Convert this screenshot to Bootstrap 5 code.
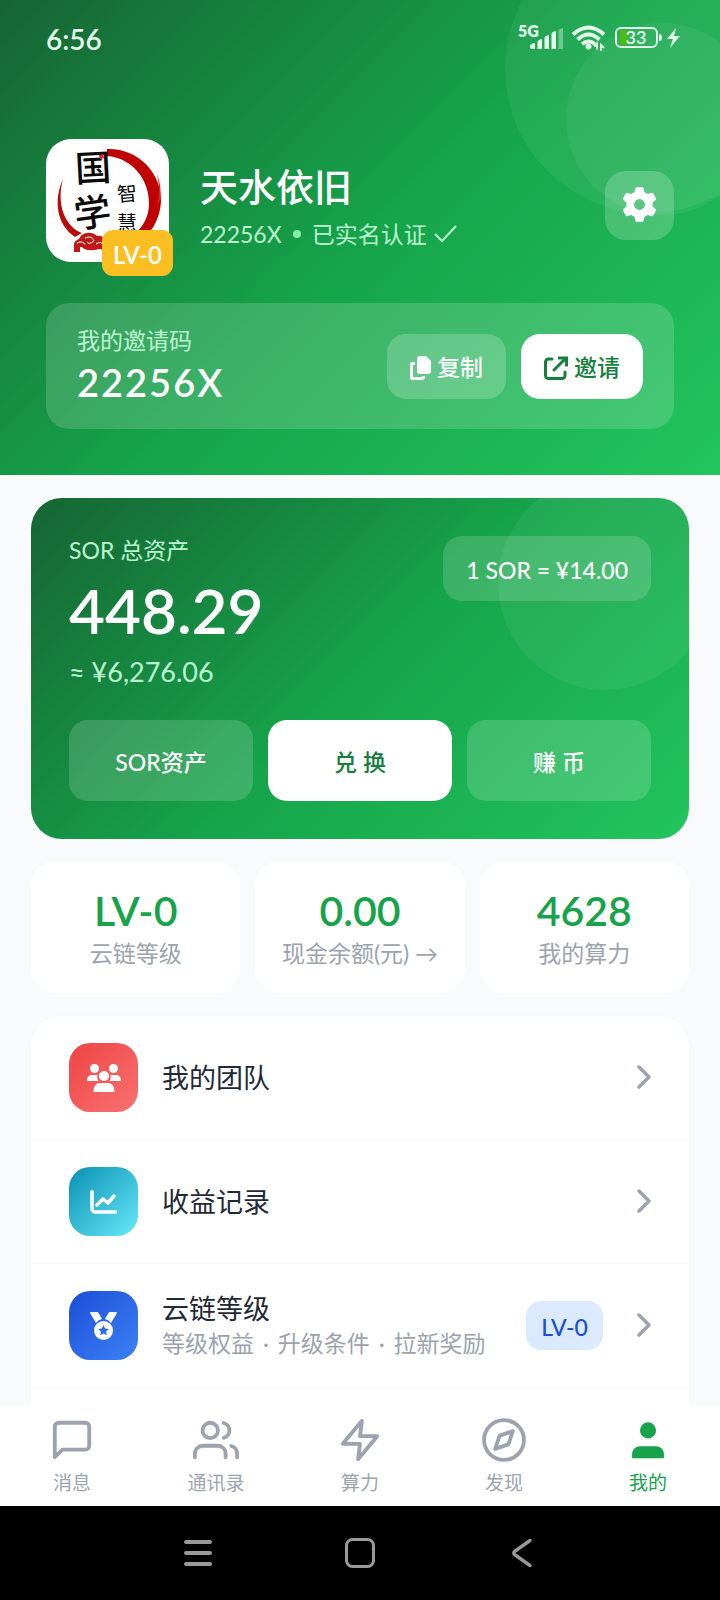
<!DOCTYPE html>
<html lang="zh-CN">
<head>
<meta charset="utf-8">
<meta name="viewport" content="width=device-width, initial-scale=1">
<title>我的</title>
<link href="https://cdn.jsdelivr.net/npm/bootstrap@5.3.0/dist/css/bootstrap.min.css" rel="stylesheet">
<style>
  :root { --brand: #16a34a; --brand-dark: #15803d; --mint: #bbf7d0; --muted: #9ca3af; }
  body { font-family: Lato, "Noto Sans CJK SC", sans-serif; font-size: 23px; line-height: 33px; background: #f8fafc; color: #1f2937; }
  svg { display: block; flex: none; overflow: visible; }
  button, a { font: inherit; }
  .green-panel { background: linear-gradient(135deg, #166534 0%, #16a34a 50%, #22c55e 100%); color: #fff; }
  .glow { position: absolute; border-radius: 50%; background: rgba(255,255,255,.06); }
  .glow-a { width: 288px; height: 288px; top: -75px; right: -73px; }
  .glow-b { width: 192px; height: 192px; top: 23px; right: -38px; }
  .glow-c { width: 214px; height: 214px; top: -22px; right: -23px; }
  .mint { color: var(--mint); }

  .hero { padding: 0 46px 46px; }
  .status { height: 78px; color: #e3f9ea; margin: 0 -8px 61px 0; }
  .clock { font-size: 28px; font-weight: 600; }

  .avatar { width: 123px; height: 123px; margin-bottom: 10px; }
  .avatar-pic { border-radius: 25px; background: #fff; }
  .avatar-tag { right: -4px; bottom: -14px; width: 71px; height: 46px; line-height: 50px; border-radius: 11px; background: #fbbf24; font-size: 24px; font-weight: 600; text-align: center; }
  .profile { gap: 31px; margin-bottom: 31px; }
  .nick { font-size: 38px; line-height: 54px; font-weight: 500; padding-bottom: 2px; }
  .verify { line-height: 38px; gap: 11px; }
  .dot { width: 8px; height: 8px; border-radius: 50%; background: #86efac; }
  .gear-btn { width: 69px; height: 69px; padding: 0 0 2px; border: 0; border-radius: 21px; background: rgba(255,255,255,.2); }

  .invite { padding: 21px 31px; border-radius: 23px; background: rgba(255,255,255,.16); }
  .code { font-size: 38px; line-height: 51px; font-weight: 600; letter-spacing: 2px; }
  .pill { height: 65px; padding: 3px 23px 0; gap: 6px; border: 0; border-radius: 19px; font-weight: 500; color: #fff; background: rgba(255,255,255,.2); white-space: nowrap; }
  .pill-white { background: #fff; color: var(--brand-dark); }
  .pill-faint { background: rgba(255,255,255,.16); }
  .pill-tall { height: 81px; }
  .gap-btn { gap: 15px; }

  .page-body { padding: 23px 31px 0; gap: 23px; }
  .asset { border-radius: 31px; padding: 38px; }
  .asset-label { line-height: 28px; }
  .asset-total { font-size: 62px; line-height: 72px; font-weight: 600; margin-top: 10px; padding-bottom: 2px; }
  .asset-cny { font-size: 27px; line-height: 48px; margin-bottom: 24px; }

  .tile { padding: 22px 8px 23px; border-radius: 23px; background: #fff; text-align: center; color: var(--muted); text-decoration: none; white-space: nowrap; }
  .tile-value { font-size: 41px; line-height: 53px; font-weight: 600; color: var(--brand); }

  .menu { background: #fff; border-radius: 31px 31px 0 0; box-shadow: 0 2px 10px rgba(15,23,42,.02); }
  .menu-row { padding: 27px 38px; gap: 24px; border-bottom: 1px solid #f8f9fb; color: #1f2937; text-decoration: none; }
  .menu-icon { width: 69px; height: 69px; border-radius: 21px; color: #fff; }
  .red { background: linear-gradient(135deg, #ef4444, #f87171); }
  .cyan { background: linear-gradient(135deg, #0891b2, #67e8f9); }
  .blue { background: linear-gradient(135deg, #1d4ed8, #3b82f6); }
  .menu-title { font-size: 27px; line-height: 36px; }
  .menu-sub { color: var(--muted); white-space: nowrap; }
  .sep { padding: 0 3px; }
  .level { width: 77px; height: 49px; line-height: 53px; margin-right: 10px; border-radius: 15px; background: #dbeafe; color: #1d4ed8; font-weight: 500; text-align: center; }

  .tabs { background: #fff; padding: 11px 0 9px; }
  .tab { flex: 1 1 0; gap: 6px; font-size: 19px; line-height: 28px; color: var(--muted); text-decoration: none; }
  .tab.active { color: var(--brand); }
  .sysbar { height: 94px; gap: 130px; background: #000; }
  .sysbar button { border: 0; padding: 0; background: none; color: #999; }
</style>
</head>
<body>
<div class="min-vh-100 d-flex flex-column">

  <header class="hero green-panel position-relative overflow-hidden">
    <div class="glow glow-a"></div>
    <div class="glow glow-b"></div>

    <div class="status position-relative d-flex align-items-center justify-content-between">
      <span class="clock">6:56</span>
      <svg width="166" height="40" viewBox="516 20 166 40" fill="currentColor">
        <text x="518" y="38" font-size="16" font-weight="800">5G</text>
        <path d="M530 47.500q0-3.500 5-3.500v6h-3q-2 0-2-2.500zM537.500 43q0-2 4.500-3v10h-4.500zM544.500 39q0-2 4.500-3v14h-4.500zM551.500 35q0-2 4.500-3v18h-4.500z"/>
        <path d="M558.500 32q0-2 4.500-3v21h-4.500z" opacity=".4"/>
        <g fill="none" stroke="currentColor" stroke-width="4"><path d="M573 35.500q15.500-14 31 0M577.500 40.500q11-10 22 0M582 45q6.500-5 13 0"/></g>
        <circle cx="588.500" cy="47.500" r="3"/>
        <path d="M594 47.500l3-3v6M601 52v-6l3 3" fill="none" stroke="currentColor" stroke-width="2"/>
        <path d="M621 31h7v15h-7q-1 0-1-1V32q0-1 1-1z" fill="#4cbb17"/>
        <rect x="616" y="29" width="41" height="19" rx="5" fill="none" stroke="currentColor" stroke-width="2"/>
        <path d="M659 35q3 0 3 3.500t-3 3.500z"/>
        <text x="636" y="45" font-size="18" font-weight="600" text-anchor="middle">33</text>
        <path d="M676 29l-9 11h6l-3 9 10-12h-6z"/>
      </svg>
    </div>

    <div class="profile position-relative d-flex align-items-center">
      <div class="avatar position-relative flex-shrink-0">
        <div class="avatar-pic">
          <svg width="123" height="123" viewBox="0 0 123 123" role="img" aria-label="国学智慧">
            <path d="M61 10C92 9 116 34 115 63 114 80 105 96 91 104L86 97C98 88 103 77 103 64 103 41 87 19 61 17z" fill="#c00000"/>
            <path d="M111 35q4 16 0 32l3-6q2-14-3-26z" fill="#d22"/>
            <path d="M17 40C7 62 11 86 29 98L36 94C19 88 10 65 17 40z" fill="#b90a0a"/>
            <path d="M28 108c-1-8 5-6 6-10 4-6 14-5 17-1 5-1 8 3 9 7l6 2v5c-5 2-10-1-13-1-7 2-14 2-17-2h-2v5h-6z" fill="#c01818"/>
            <path d="M31 104q6-3 8 2M39 99q7-3 9 3-5 4-7 1M50 105q5-4 8 2" fill="none" stroke="#fff" stroke-width="1"/>
            <g fill="#0a0a0a" font-family="'Noto Sans CJK SC', sans-serif">
              <text x="29" y="42" font-size="36" font-weight="500" transform="rotate(-3 47 28)">国</text>
              <text x="28" y="87" font-size="37" font-weight="500" transform="rotate(-8 46 74)">学</text>
              <text x="71" y="62" font-size="20" transform="rotate(-5 81 55)">智</text>
              <text x="71" y="92" font-size="20">慧</text>
            </g>
            <path d="M53 16l4-1 1 4-4 1z" fill="#d22"/>
          </svg>
        </div>
        <span class="avatar-tag position-absolute">LV-0</span>
      </div>
      <div class="flex-grow-1">
        <div class="nick">天水依旧</div>
        <div class="verify mint d-flex align-items-center">
          <span>22256X</span><span class="dot"></span>
          <span class="d-flex align-items-center gap-2">已实名认证
            <svg width="22" height="20" viewBox="0 0 22 20" fill="none" stroke="currentColor" stroke-width="2"><path d="M0 10l7 7L21 2"/></svg>
          </span>
        </div>
      </div>
      <button class="gear-btn d-flex align-items-center justify-content-center" aria-label="设置">
        <svg width="35" height="35" viewBox="0 0 512 512" fill="#fff"><path d="M495.900 166.600c3.200 8.700 .5 18.400-6.400 24.600l-43.300 39.400c1.100 8.300 1.700 16.800 1.700 25.400s-.6 17.100-1.700 25.400l43.300 39.400c6.900 6.200 9.600 15.900 6.400 24.600c-4.400 11.900-9.700 23.300-15.800 34.300l-4.700 8.100c-6.600 11-14 21.400-22.100 31.200c-5.900 7.200-15.700 9.600-24.500 6.800l-55.700-17.700c-13.400 10.300-28.200 18.900-44 25.400l-12.500 57.100c-2 9.100-9 16.300-18.200 17.800c-13.800 2.300-28 3.500-42.500 3.500s-28.700-1.200-42.500-3.500c-9.200-1.500-16.200-8.700-18.200-17.800l-12.500-57.100c-15.800-6.500-30.600-15.100-44-25.400L83.100 425.900c-8.800 2.800-18.600 .3-24.500-6.800c-8.100-9.800-15.500-20.200-22.100-31.200l-4.700-8.100c-6.100-11-11.400-22.400-15.800-34.300c-3.200-8.700-.5-18.400 6.400-24.600l43.300-39.400C64.600 273.100 64 264.600 64 256s.6-17.100 1.700-25.400L22.400 191.200c-6.900-6.200-9.600-15.900-6.400-24.600c4.400-11.900 9.700-23.300 15.800-34.300l4.700-8.100c6.600-11 14-21.400 22.100-31.200c5.900-7.200 15.700-9.600 24.500-6.800l55.700 17.700c13.400-10.300 28.200-18.900 44-25.400l12.500-57.100c2-9.100 9-16.300 18.200-17.800C227.300 1.200 241.500 0 256 0s28.700 1.200 42.500 3.500c9.200 1.500 16.200 8.700 18.200 17.800l12.500 57.100c15.800 6.500 30.600 15.100 44 25.400l55.700-17.700c8.800-2.800 18.600-.3 24.500 6.800c8.100 9.800 15.500 20.200 22.100 31.200l4.700 8.100c6.100 11 11.400 22.400 15.800 34.300zM256 336a80 80 0 1 0 0-160 80 80 0 1 0 0 160z"/></svg>
      </button>
    </div>

    <div class="invite position-relative d-flex align-items-center justify-content-between">
      <div>
        <div class="mint">我的邀请码</div>
        <div class="code">22256X</div>
      </div>
      <div class="d-flex gap-btn">
        <button class="pill d-flex align-items-center">
          <svg width="21" height="24" viewBox="0 0 21 24" fill="currentColor"><path d="M10 0h6l5 5v10a3 3 0 0 1-3 3h-8a3 3 0 0 1-3-3V3a3 3 0 0 1 3-3z"/><path d="M5 6H2a2 2 0 0 0-2 2v14a2 2 0 0 0 2 2h10a3 3 0 0 0 3-3v-1h-3v1H3V9h2z"/></svg>
          复制
        </button>
        <button class="pill pill-white d-flex align-items-center">
          <svg width="24" height="24" viewBox="0 0 24 24" fill="none" stroke="currentColor" stroke-width="3" stroke-linecap="round"><path d="M8 3H4.500A3 3 0 0 0 1.500 6v13.500a3 3 0 0 0 3 3H18a3 3 0 0 0 3-3V16"/><path d="M10 14L21.500 2.500"/><path d="M14 2h8.500v8.500" stroke-linecap="butt"/></svg>
          邀请
        </button>
      </div>
    </div>
  </header>

  <main class="page-body flex-grow-1 d-flex flex-column">
    <section class="asset green-panel position-relative overflow-hidden">
      <div class="glow glow-c"></div>
      <div class="position-relative">
        <div class="d-flex justify-content-between align-items-start">
          <div>
            <div class="asset-label mint">SOR 总资产</div>
            <div class="asset-total">448.29</div>
            <div class="asset-cny mint">≈ ¥6,276.06</div>
          </div>
          <div class="pill pill-faint d-flex align-items-center">1 SOR = ¥14.00</div>
        </div>
        <div class="d-flex gap-btn">
          <button class="pill pill-faint pill-tall col">SOR资产</button>
          <button class="pill pill-white pill-tall col">兑 换</button>
          <button class="pill pill-faint pill-tall col">赚 币</button>
        </div>
      </div>
    </section>

    <section class="d-flex gap-btn">
      <div class="tile col"><div class="tile-value">LV-0</div><div>云链等级</div></div>
      <a class="tile col" href="#balance"><div class="tile-value">0.00</div><div>现金余额(元) →</div></a>
      <div class="tile col"><div class="tile-value">4628</div><div>我的算力</div></div>
    </section>

    <nav class="menu flex-grow-1">
      <a class="menu-row d-flex align-items-center" href="#team">
        <span class="menu-icon red d-flex align-items-center justify-content-center">
          <svg width="34" height="28" viewBox="0 0 34 28" fill="currentColor"><circle cx="7.500" cy="4.500" r="4.500"/><circle cx="26.500" cy="4.500" r="4.500"/><circle cx="17" cy="12" r="5"/><path d="M0 17c0-4 2-6 5-6h4c1 0 1.500.3 1.500.3-.6 2.500 0 4.300 1 5.700zM34 17c0-4-2-6-5-6h-4c-1 0-1.500.3-1.500.3.6 2.500 0 4.300-1 5.700zM6.500 28c0-6 2.500-9 7-9h7c4.500 0 7 3 7 9z"/></svg>
        </span>
        <span class="menu-title flex-grow-1">我的团队</span>
        <svg width="14" height="24" viewBox="0 0 14 24" fill="none" stroke="#9ca3af" stroke-width="3.500" stroke-linecap="round" stroke-linejoin="round"><path d="M2 1l10 10L2 21"/></svg>
      </a>
      <a class="menu-row d-flex align-items-center" href="#income">
        <span class="menu-icon cyan d-flex align-items-center justify-content-center">
          <svg width="27" height="24" viewBox="0 0 27 24" fill="none" stroke="currentColor" stroke-width="3.500" stroke-linecap="round" stroke-linejoin="round"><path d="M2 1.500V19a3 3 0 0 0 3 3H25.500M7 15l6-6 5 4 6-7"/></svg>
        </span>
        <span class="menu-title flex-grow-1">收益记录</span>
        <svg width="14" height="24" viewBox="0 0 14 24" fill="none" stroke="#9ca3af" stroke-width="3.500" stroke-linecap="round" stroke-linejoin="round"><path d="M2 1l10 10L2 21"/></svg>
      </a>
      <a class="menu-row d-flex align-items-center" href="#level">
        <span class="menu-icon blue d-flex align-items-center justify-content-center">
          <svg width="27" height="28" viewBox="0 0 27 28" fill="currentColor"><path d="M0 1Q0 0 1 0h6q1 0 1.500 1l3.500 6q-4 1-6 4zM27 1q0-1-1-1h-6q-1 0-1.500 1L15 7q4 1 6 4z"/><path fill-rule="evenodd" d="M13.500 9a9.500 9.500 0 1 1 0 19 9.500 9.500 0 0 1 0-19zm0 4l-1.600 3.400-3.700.5 2.700 2.600-.7 3.700 3.300-1.800 3.300 1.800-.7-3.700 2.700-2.600-3.700-.5z"/></svg>
        </span>
        <span class="flex-grow-1">
          <span class="menu-title d-block">云链等级</span>
          <span class="menu-sub d-block">等级权益<span class="sep"> · </span>升级条件<span class="sep"> · </span>拉新奖励</span>
        </span>
        <span class="level">LV-0</span>
        <svg width="14" height="24" viewBox="0 0 14 24" fill="none" stroke="#9ca3af" stroke-width="3.500" stroke-linecap="round" stroke-linejoin="round"><path d="M2 1l10 10L2 21"/></svg>
      </a>
    </nav>
  </main>

  <footer class="sticky-bottom">
    <nav class="tabs d-flex">
      <a class="tab d-flex flex-column align-items-center" href="#chat">
        <svg width="46" height="46" viewBox="0 0 24 24" fill="none" stroke="currentColor" stroke-width="2" stroke-linecap="round" stroke-linejoin="round"><path d="M21 15a2 2 0 0 1-2 2H7l-4 4V5a2 2 0 0 1 2-2h14a2 2 0 0 1 2 2z"/></svg>消息</a>
      <a class="tab d-flex flex-column align-items-center" href="#contacts">
        <svg width="46" height="46" viewBox="0 0 24 24" fill="none" stroke="currentColor" stroke-width="2" stroke-linecap="round" stroke-linejoin="round"><path d="M17 21v-2a4 4 0 0 0-4-4H5a4 4 0 0 0-4 4v2"/><circle cx="9" cy="7" r="4"/><path d="M23 21v-2a4 4 0 0 0-3-3.870M16 3.130a4 4 0 0 1 0 7.750"/></svg>通讯录</a>
      <a class="tab d-flex flex-column align-items-center" href="#power">
        <svg width="46" height="46" viewBox="0 0 24 24" fill="none" stroke="currentColor" stroke-width="2" stroke-linecap="round" stroke-linejoin="round"><path d="M13 2L3 14h9l-1 8 10-12h-9l1-8z"/></svg>算力</a>
      <a class="tab d-flex flex-column align-items-center" href="#discover">
        <svg width="46" height="46" viewBox="0 0 24 24" fill="none" stroke="currentColor" stroke-width="2" stroke-linecap="round" stroke-linejoin="round"><circle cx="12" cy="12" r="10.400"/><path d="M16.600 7.400l-2.300 6.900-6.900 2.300 2.300-6.900z"/></svg>发现</a>
      <a class="tab active d-flex flex-column align-items-center" href="#me" aria-current="page">
        <svg width="46" height="46" viewBox="0 0 24 24" fill="currentColor"><circle cx="12" cy="7" r="4.200"/><path d="M3.700 21.500v-2.300a4 4 0 0 1 4-4h8.600a4 4 0 0 1 4 4v2.300z"/></svg>我的</a>
    </nav>
    <div class="sysbar d-flex align-items-center justify-content-center">
      <button aria-label="菜单"><svg width="32" height="32" viewBox="0 0 32 32" stroke="currentColor" stroke-width="4" stroke-linecap="round"><path d="M4 5h24M4 16h24M4 27h24"/></svg></button>
      <button aria-label="主屏幕"><svg width="32" height="32" viewBox="0 0 32 32" fill="none" stroke="currentColor" stroke-width="3"><rect x="2.500" y="2.500" width="27" height="27" rx="6"/></svg></button>
      <button aria-label="返回"><svg width="32" height="32" viewBox="0 0 32 32" fill="none" stroke="currentColor" stroke-width="3.400" stroke-linecap="round"><path d="M24 3.500L9 14q-2.500 2 0 4L24 28.500"/></svg></button>
    </div>
  </footer>
</div>
<script src="https://cdn.jsdelivr.net/npm/bootstrap@5.3.0/dist/js/bootstrap.bundle.min.js"></script>
</body>
</html>
